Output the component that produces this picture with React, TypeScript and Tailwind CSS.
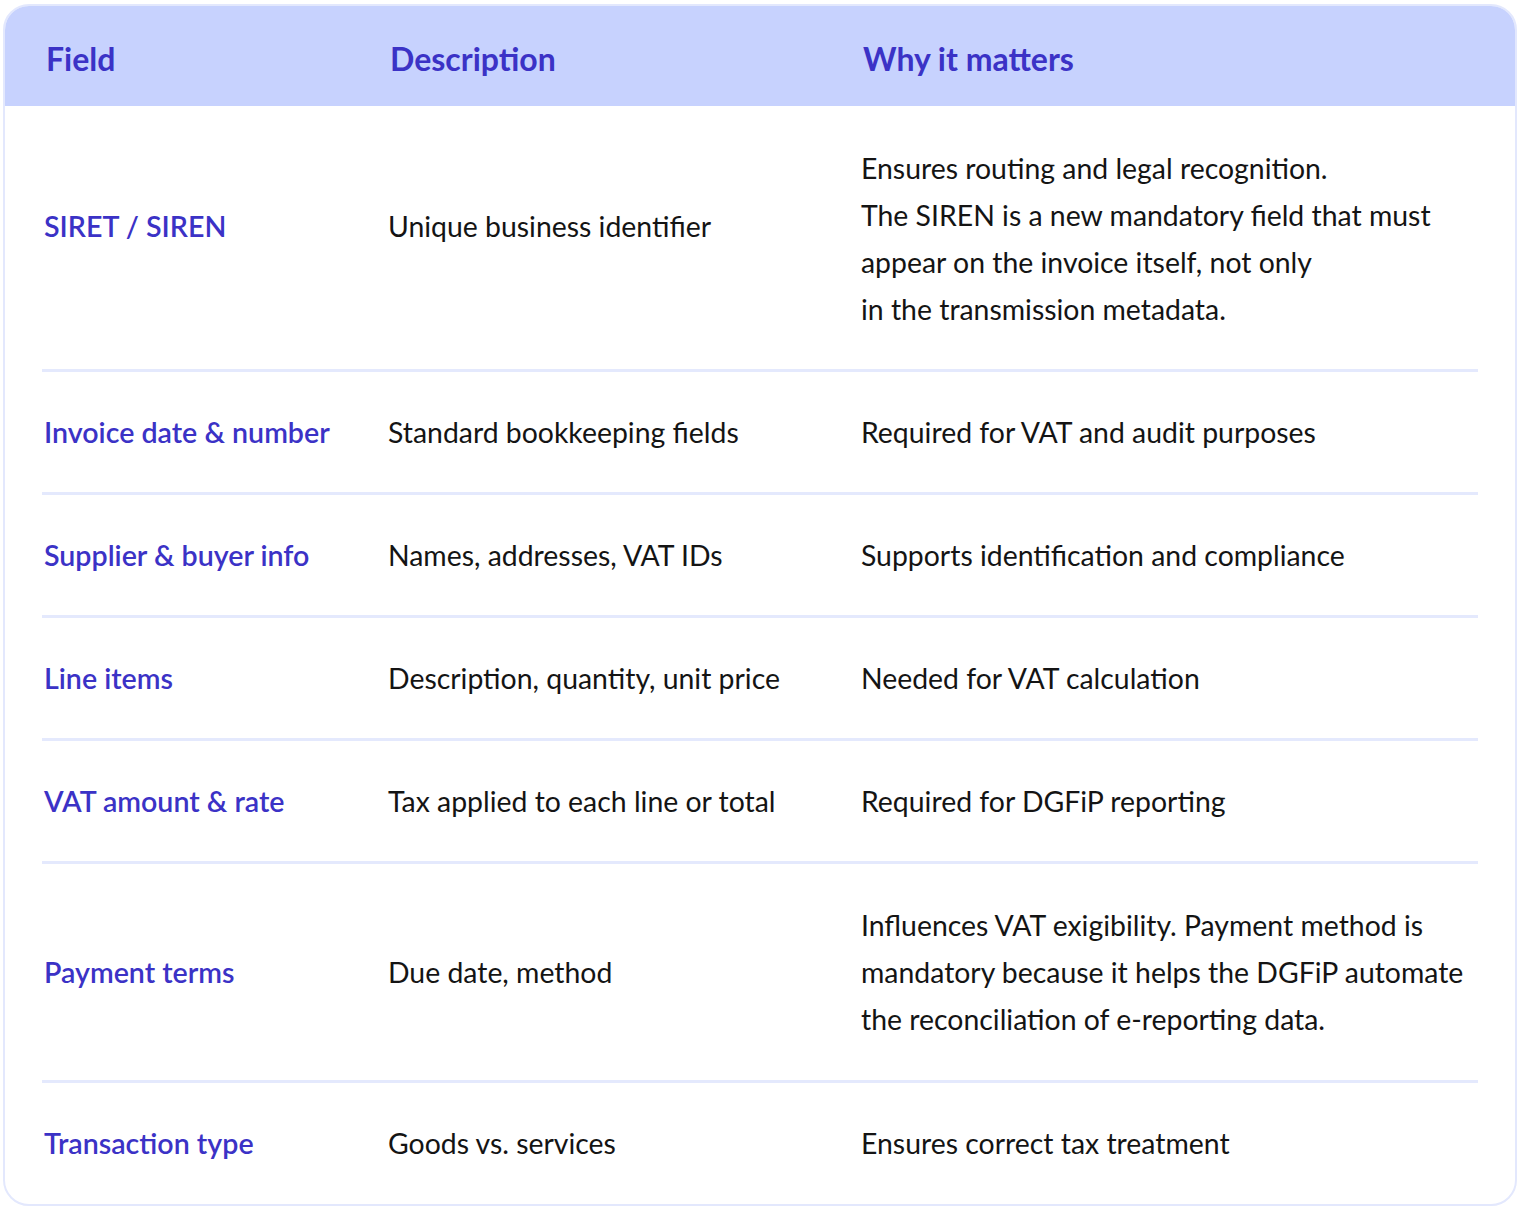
import React from 'react';

interface Row {
  field: string;
  description: string;
  why: string[];
  lift?: boolean;
}

const ROWS: Row[] = [
  {
    field: 'SIRET / SIREN',
    description: 'Unique business identifier',
    why: [
      'Ensures routing and legal recognition.',
      'The SIREN is a new mandatory field that must',
      'appear on the invoice itself, not only',
      'in the transmission metadata.',
    ],
    lift: true,
  },
  { field: 'Invoice date & number', description: 'Standard bookkeeping fields', why: ['Required for VAT and audit purposes'] },
  { field: 'Supplier & buyer info', description: 'Names, addresses, VAT IDs', why: ['Supports identification and compliance'] },
  { field: 'Line items', description: 'Description, quantity, unit price', why: ['Needed for VAT calculation'] },
  { field: 'VAT amount & rate', description: 'Tax applied to each line or total', why: ['Required for DGFiP reporting'] },
  {
    field: 'Payment terms',
    description: 'Due date, method',
    why: [
      'Influences VAT exigibility. Payment method is',
      'mandatory because it helps the DGFiP automate',
      'the reconciliation of e-reporting data.',
    ],
  },
  { field: 'Transaction type', description: 'Goods vs. services', why: ['Ensures correct tax treatment'] },
];

export default function App() {
  return (
    <div className="w-[1520px] h-[1210px] bg-white px-[3px] pt-[4px] font-['Lato','Noto_Sans',sans-serif]">
      <div className="rounded-[26px] border-2 border-[#e3e8fd] overflow-hidden bg-white">
        <div className="bg-[#c7d2fe] h-[100px] pt-[6px] px-[39px] grid grid-cols-[344px_473px_1fr] items-center text-[32px] font-bold text-[#3b32c6]">
          <div className="pl-[2px]">Field</div>
          <div className="pl-[2px]">Description</div>
          <div className="pl-[2px]">Why it matters</div>
        </div>
        <div className="px-[37px]">
          {ROWS.map((row, i) => (
            <div
              key={i}
              className={`grid grid-cols-[344px_473px_1fr] items-center leading-[47px] ${
                i === 0
                  ? 'pt-[39px] pb-[36px]'
                  : i === 5
                  ? 'border-t-[3px] border-[#e4e9fd] pt-[38px] pb-[37px]'
                  : i === 6
                  ? 'border-t-[3px] border-[#e4e9fd] pt-[37px] pb-[37px]'
                  : 'border-t-[3px] border-[#e4e9fd] pt-[37px] pb-[36px]'
              }`}
            >
              <div className={`pl-[2px] text-[28.6px] font-semibold text-[#3b32c6] ${row.lift ? 'mb-[25px]' : ''}`}>
                {row.field}
              </div>
              <div className={`pl-[2px] text-[28.4px] text-[#141414] ${row.lift ? 'mb-[25px]' : ''}`}>
                {row.description}
              </div>
              <div className="pl-[2px] text-[28.4px] text-[#141414]">
                {row.why.map((line, j) => (
                  <div key={j}>{line}</div>
                ))}
              </div>
            </div>
          ))}
        </div>
      </div>
    </div>
  );
}
